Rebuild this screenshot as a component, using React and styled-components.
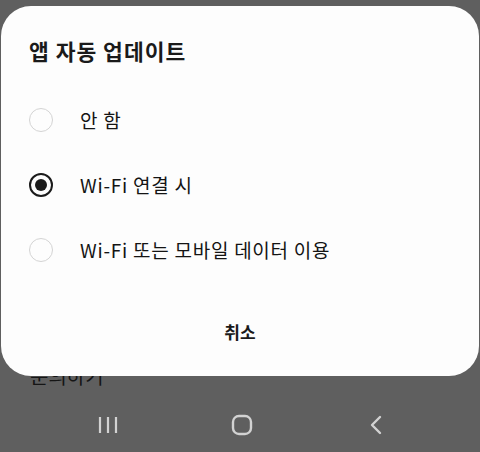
import styled, { createGlobalStyle } from "styled-components";

const GlobalStyle = createGlobalStyle`
  html, body {
    margin: 0;
    padding: 0;
    background: #5f5f5f;
  }
  body {
    font-family: "Noto Sans CJK KR", "Noto Sans", sans-serif;
  }
`;

const Screen = styled.div`
  position: relative;
  width: 480px;
  height: 452px;
  overflow: hidden;
  background: #5f5f5f;
  display: flex;
  flex-direction: column;
`;

const BehindPage = styled.div`
  flex: 1;
  display: flex;
  flex-direction: column;
  justify-content: flex-end;
  padding: 0 30px 8px;
`;

const BehindLabel = styled.span`
  font-size: 20px;
  line-height: 28px;
  color: #151515;
`;

const NavBar = styled.nav`
  height: 54px;
  display: grid;
  grid-template-columns: repeat(3, 1fr);
  align-items: center;
  justify-items: center;
  padding: 0 37px 0 41px;
  box-sizing: border-box;
`;

const NavButton = styled.button`
  background: none;
  border: none;
  padding: 0;
  width: 30px;
  height: 30px;
  display: flex;
  align-items: center;
  justify-content: center;
  color: #d2d2d2;
`;

const Sheet = styled.div`
  position: absolute;
  top: 6px;
  left: 1px;
  right: 1px;
  height: 370px;
  background: #fdfdfd;
  border-radius: 30px;
  padding: 30px 28px 0;
  box-sizing: border-box;
  display: flex;
  flex-direction: column;
`;

const Title = styled.h2`
  margin: 0 0 21px;
  font-size: 21.5px;
  line-height: 30px;
  font-weight: 700;
  color: #1a1a1a;
  letter-spacing: 1px;
`;

const OptionList = styled.div`
  display: flex;
  flex-direction: column;
`;

const OptionRow = styled.label`
  height: 65px;
  display: flex;
  align-items: center;
  gap: 27px;
`;

const Radio = styled.span`
  width: 24px;
  height: 24px;
  border-radius: 50%;
  box-sizing: border-box;
  border: ${({ $checked }) => ($checked ? "2px solid #1b1b1b" : "1.5px solid #d4d4d4")};
  display: flex;
  align-items: center;
  justify-content: center;
  flex-shrink: 0;

  &::after {
    content: "";
    width: 12px;
    height: 12px;
    border-radius: 50%;
    background: #1b1b1b;
    display: ${({ $checked }) => ($checked ? "block" : "none")};
  }
`;

const OptionText = styled.span`
  font-size: 19px;
  font-weight: 400;
  color: #141414;
  letter-spacing: 0.75px;
`;

const CancelButton = styled.button`
  margin-top: 24px;
  height: 50px;
  border: none;
  background: none;
  font-family: inherit;
  font-size: 17px;
  font-weight: 700;
  color: #1a1a1a;
`;

const options = [
  { label: "안 함", checked: false },
  { label: "Wi-Fi 연결 시", checked: true },
  { label: "Wi-Fi 또는 모바일 데이터 이용", checked: false },
];

const RecentsIcon = () => (
  <svg width="20" height="18" viewBox="0 0 20 18" fill="none" stroke="currentColor" strokeWidth="2.2">
    <path d="M2 1v16M10 1v16M18 1v16" />
  </svg>
);

const HomeIcon = () => (
  <svg width="22" height="22" viewBox="0 0 22 22" fill="none" stroke="currentColor" strokeWidth="2.4">
    <rect x="2" y="2" width="18" height="18" rx="6" />
  </svg>
);

const BackIcon = () => (
  <svg width="14" height="20" viewBox="0 0 14 20" fill="none" stroke="currentColor" strokeWidth="2.4" strokeLinecap="round" strokeLinejoin="round">
    <path d="M11 2L3 10l8 8" />
  </svg>
);

export default function App() {
  return (
    <>
      <GlobalStyle />
      <Screen>
        <BehindPage>
          <BehindLabel>문의하기</BehindLabel>
        </BehindPage>
        <NavBar>
          <NavButton aria-label="최근 앱"><RecentsIcon /></NavButton>
          <NavButton aria-label="홈"><HomeIcon /></NavButton>
          <NavButton aria-label="뒤로"><BackIcon /></NavButton>
        </NavBar>
        <Sheet>
          <Title>앱 자동 업데이트</Title>
          <OptionList>
            {options.map((o) => (
              <OptionRow key={o.label}>
                <Radio $checked={o.checked} />
                <OptionText>{o.label}</OptionText>
              </OptionRow>
            ))}
          </OptionList>
          <CancelButton>취소</CancelButton>
        </Sheet>
      </Screen>
    </>
  );
}
